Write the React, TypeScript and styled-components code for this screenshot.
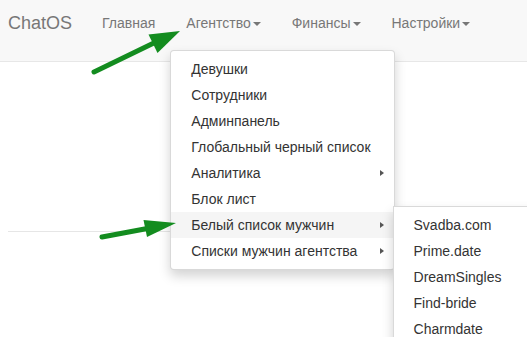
import styled, { createGlobalStyle } from "styled-components";

const GlobalStyle = createGlobalStyle`
  html, body {
    margin: 0;
    padding: 0;
    overflow: hidden;
    background: #fff;
    font-family: "Liberation Sans", Arial, sans-serif;
  }
`;

interface MenuEntry {
  label: string;
  sub?: string[];
  open?: boolean;
}

const agencyMenu: MenuEntry[] = [
  { label: "Девушки" },
  { label: "Сотрудники" },
  { label: "Админпанель" },
  { label: "Глобальный черный список" },
  { label: "Аналитика", sub: [] },
  { label: "Блок лист" },
  {
    label: "Белый список мужчин",
    open: true,
    sub: ["Svadba.com", "Prime.date", "DreamSingles", "Find-bride", "Charmdate"],
  },
  { label: "Списки мужчин агентства", sub: [] },
];

const App = () => {
  return (
    <Page>
      <GlobalStyle />
      <Navbar>
        <Brand>ChatOS</Brand>
        <NavItem>Главная</NavItem>
        <NavItem>
          Агентство<Caret />
          <Dropdown>
            {agencyMenu.map((entry) => (
              <MenuItem key={entry.label} $active={!!entry.open}>
                {entry.label}
                {entry.sub && <SubArrow />}
                {entry.open && entry.sub && (
                  <SubMenu>
                    {entry.sub.map((site) => (
                      <MenuItem key={site} $active={false}>
                        {site}
                      </MenuItem>
                    ))}
                  </SubMenu>
                )}
              </MenuItem>
            ))}
          </Dropdown>
        </NavItem>
        <NavItem>
          Финансы<Caret />
        </NavItem>
        <NavItem>
          Настройки<Caret />
        </NavItem>
      </Navbar>

      <Content>
        <Divider />
      </Content>

      <Arrows width="527" height="337" viewBox="0 0 527 337">
        <line x1="94" y1="72" x2="160" y2="40" stroke="#138c1f" strokeWidth="5" strokeLinecap="round" />
        <polygon points="180,31 148.5,34.5 157.5,53" fill="#138c1f" />
        <line x1="102" y1="237" x2="150" y2="228" stroke="#138c1f" strokeWidth="5" strokeLinecap="round" />
        <polygon points="176,223 143.5,220 147,237" fill="#138c1f" />
      </Arrows>
    </Page>
  );
};

const Page = styled.div`
  position: relative;
  width: 100%;
  height: 337px;
  overflow: hidden;
`;

const Navbar = styled.nav`
  display: flex;
  align-items: flex-start;
  height: 61px;
  padding-left: 8px;
  background-color: #f8f8f8;
  border-bottom: 1px solid #e7e7e7;
  position: relative;
  z-index: 2;
`;

const Brand = styled.div`
  font-size: 18px;
  line-height: 20px;
  padding: 13px 15px 0 0;
  color: #777;
`;

const NavItem = styled.div`
  position: relative;
  height: 50px;
  box-sizing: border-box;
  padding: 13px 15px 17px;
  margin-right: 1px;
  font-size: 14px;
  line-height: 20px;
  color: #777;
  white-space: nowrap;
`;

const Caret = styled.span`
  display: inline-block;
  width: 0;
  height: 0;
  margin-left: 2px;
  vertical-align: middle;
  border-top: 4px solid #777;
  border-left: 4px solid transparent;
  border-right: 4px solid transparent;
`;

const Dropdown = styled.div`
  position: absolute;
  top: 100%;
  left: -1px;
  min-width: 160px;
  padding: 5px 0;
  background-color: #fff;
  border: 1px solid rgba(0, 0, 0, 0.15);
  border-radius: 4px;
  box-shadow: 0 6px 12px rgba(0, 0, 0, 0.175);
`;

const MenuItem = styled.div<{ $active: boolean }>`
  position: relative;
  padding: 3px 23px 3px 20px;
  font-size: 14px;
  line-height: 20px;
  color: #333;
  white-space: nowrap;
  background-color: ${(p) => (p.$active ? "#f5f5f5" : "transparent")};
`;

const SubArrow = styled.span`
  position: absolute;
  right: 10px;
  top: 10px;
  width: 0;
  height: 0;
  border-left: 4px solid #555;
  border-top: 3.5px solid transparent;
  border-bottom: 3.5px solid transparent;
`;

const SubMenu = styled(Dropdown)`
  top: -6px;
  left: 100%;
  margin-left: -1px;
  border-radius: 0 6px 6px 6px;
  min-width: 180px;
`;

const Content = styled.main`
  padding: 0 8px;
`;

const Divider = styled.hr`
  margin: 169px 0 0;
  border: 0;
  border-top: 1px solid #e6e6e6;
`;

const Arrows = styled.svg`
  position: absolute;
  top: 0;
  left: 0;
  pointer-events: none;
  z-index: 5;
`;

export default App;
